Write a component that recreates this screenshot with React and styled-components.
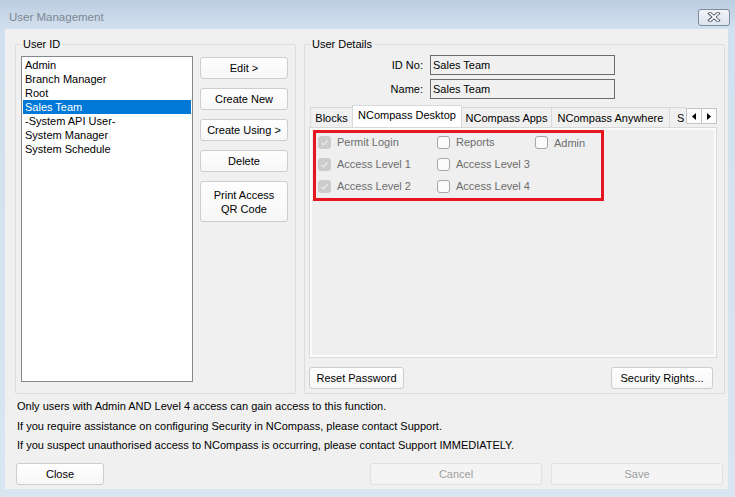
import React from 'react';
import styled, { createGlobalStyle } from 'styled-components';

const Global = createGlobalStyle`
  html, body { margin: 0; padding: 0; }
  body {
    font-family: "Liberation Sans", Arial, sans-serif;
    font-size: 11px;
    color: #000;
    background: #dae5f2;
  }
`;

const Window = styled.div`
  width: 735px;
  height: 497px;
  display: flex;
  flex-direction: column;
  background: linear-gradient(to bottom, #bccde1 0px, #d2dfee 28px, #dae5f2 100%);
  overflow: hidden;
`;

const TitleBar = styled.div`
  height: 29px;
  flex-shrink: 0;
  box-sizing: border-box;
  padding: 5px 5px 0 9px;
  display: flex;
  align-items: center;
  justify-content: space-between;
`;

const Title = styled.span`
  font-size: 11.5px;
  color: #7d8793;
`;

const CloseBtn = styled.div`
  width: 32px;
  height: 17px;
  box-sizing: border-box;
  border: 1px solid #7c8b9d;
  border-radius: 3px;
  background: linear-gradient(#f2f5f9, #dce4ee);
  display: flex;
  align-items: center;
  justify-content: center;
`;

const Client = styled.div`
  margin: 0 7px 0 5px;
  height: 460px;
  box-sizing: border-box;
  background: #f0f0f0;
  display: flex;
  flex-direction: column;
  padding-top: 15px;
`;

const TopRow = styled.div`
  display: flex;
  gap: 8px;
  padding-left: 10px;
`;

const Group = styled.div`
  position: relative;
  width: ${p => p.$w}px;
  height: 350px;
  box-sizing: border-box;
  border: 1px solid #dcdcdc;
  border-radius: 2px;
  display: flex;
  flex-direction: ${p => p.$dir || 'row'};
`;

const GroupLabel = styled.span`
  position: absolute;
  top: -8px;
  left: 5px;
  padding: 0 2px;
  background: #f0f0f0;
  line-height: 14px;
`;

const UserIdBody = styled.div`
  display: flex;
  gap: 7px;
  padding: 11px 0 0 5px;
`;

const ListBox = styled.div`
  width: 172px;
  height: 326px;
  box-sizing: border-box;
  border: 1px solid #828790;
  background: #fff;
  padding: 1px;
`;

const ListItem = styled.div`
  height: 14px;
  line-height: 14px;
  padding-left: 2px;
  background: ${p => (p.$sel ? '#0078d7' : 'transparent')};
  color: ${p => (p.$sel ? '#fff' : '#000')};
  white-space: nowrap;
`;

const ButtonCol = styled.div`
  display: flex;
  flex-direction: column;
  gap: 9px;
  padding-top: 1px;
  width: 88px;
`;

const Button = styled.button`
  width: ${p => (p.$w ? `${p.$w}px` : '100%')};
  height: ${p => p.$h || 22}px;
  box-sizing: border-box;
  margin: 0;
  padding: 0;
  border: 1px solid ${p => (p.disabled ? '#e2e2e2' : '#cdcdcd')};
  border-radius: 3px;
  background: ${p => (p.disabled ? '#f4f4f4' : 'linear-gradient(#fefefe, #f7f7f7)')};
  font-family: "Liberation Sans", Arial, sans-serif;
  font-size: 11px;
  line-height: 14px;
  color: ${p => (p.disabled ? '#a0a0a0' : '#000')};
  text-align: center;
  flex-shrink: 0;
`;

const FormGrid = styled.div`
  display: grid;
  grid-template-columns: 118px 185px;
  column-gap: 7px;
  row-gap: 4px;
  margin-top: 10px;
`;

const FieldLabel = styled.div`
  text-align: right;
  line-height: 21px;
  height: 20px;
`;

const Field = styled.div`
  height: 20px;
  box-sizing: border-box;
  border: 1px solid #6c6c6c;
  background: #f0f0f0;
  padding: 1px 2px 0;
  line-height: 16px;
`;

const TabArea = styled.div`
  margin-top: 6px;
  padding: 0 7px 0 4px;
  display: flex;
  flex-direction: column;
`;

const TabStrip = styled.div`
  display: flex;
  align-items: flex-end;
  height: 22px;
`;

const TabList = styled.div`
  flex: 1;
  display: flex;
  align-items: flex-end;
  height: 22px;
  overflow: hidden;
  padding-left: 1px;
`;

const Tab = styled.div`
  width: ${p => p.$w}px;
  height: ${p => (p.$active ? 22 : 20)}px;
  box-sizing: border-box;
  flex-shrink: 0;
  border: 1px solid #d9d9d9;
  border-bottom: none;
  margin-right: -1px;
  background: ${p => (p.$active ? '#ffffff' : '#f0f0f0')};
  line-height: ${p => (p.$active ? 19 : 20)}px;
  text-align: ${p => p.$align || 'center'};
  padding-left: ${p => p.$pl || 0}px;
  white-space: nowrap;
  overflow: hidden;
  position: relative;
  z-index: ${p => (p.$active ? 1 : 0)};
`;

const ArrowPair = styled.div`
  display: flex;
  margin-bottom: 3px;
`;

const ArrowBtn = styled.div`
  width: 16px;
  height: 16px;
  box-sizing: border-box;
  border: 1px solid #c4c4c4;
  margin-left: ${p => (p.$first ? 0 : -1)}px;
  background: #fdfdfd;
  display: flex;
  align-items: center;
  justify-content: center;
`;

const Panel = styled.div`
  height: 231px;
  box-sizing: border-box;
  border: 1px solid #d9d9d9;
  background: #fbfbfb;
  padding: 2px;
`;

const PanelInner = styled.div`
  height: 100%;
  background: #efefef;
  padding-left: 1px;
`;

const RedBox = styled.div`
  width: 291px;
  height: 71px;
  box-sizing: border-box;
  border: 3px solid #e5161f;
  padding: 2px 0 0 2px;
  display: grid;
  grid-template-columns: 119px 98px auto;
  grid-auto-rows: 14px;
  row-gap: 8px;
`;

const CheckItem = styled.div`
  display: flex;
  align-items: center;
  gap: 6px;
  color: #6d6d6d;
  white-space: nowrap;
  margin-top: ${p => p.$dy || 0}px;
`;

const Box = styled.div`
  width: 13px;
  height: 13px;
  box-sizing: border-box;
  border-radius: 3px;
  border: 1px solid ${p => (p.$checked ? '#cccccc' : '#a6a6a6')};
  background: ${p => (p.$checked ? '#cccccc' : '#fbfbfb')};
  display: flex;
  align-items: center;
  justify-content: center;
  flex-shrink: 0;
`;

const DetailButtons = styled.div`
  margin-top: 9px;
  display: flex;
  justify-content: space-between;
  padding-right: 4px;
`;

const Notes = styled.div`
  margin-top: 3px;
  padding-left: 12px;
  line-height: 19.5px;
`;

const Footer = styled.div`
  margin-top: 7px;
  display: flex;
  gap: 9px;
  padding: 0 5px 0 11px;
`;

const Spacer = styled.div`
  flex: 1;
`;

const users = [
  'Admin',
  'Branch Manager',
  'Root',
  'Sales Team',
  '-System API User-',
  'System Manager',
  'System Schedule',
];

const tabs = [
  { label: 'Blocks', w: 43 },
  { label: 'NCompass Desktop', w: 110, active: true },
  { label: 'NCompass Apps', w: 91 },
  { label: 'NCompass Anywhere', w: 119 },
  { label: 'S', w: 30, align: 'left', pl: 7 },
];

const checks = [
  { label: 'Permit Login', checked: true },
  { label: 'Reports' },
  { label: 'Admin', dy: 1 },
  { label: 'Access Level 1', checked: true },
  { label: 'Access Level 3' },
  null,
  { label: 'Access Level 2', checked: true },
  { label: 'Access Level 4' },
  null,
];

const CheckMark = () => (
  <svg width="9" height="9" viewBox="0 0 9 9">
    <polyline points="1.5,4.8 3.5,6.8 7.6,2.4" fill="none" stroke="#f2f2f2" strokeWidth="1.1" />
  </svg>
);

export default function App() {
  return (
    <>
      <Global />
      <Window>
        <TitleBar>
          <Title>User Management</Title>
          <CloseBtn>
            <svg width="14" height="10" viewBox="0 0 14 10">
              <path d="M3 1.5 L11 8.5 M11 1.5 L3 8.5" stroke="#505a66" strokeWidth="3.6" strokeLinecap="square" />
              <path d="M3 1.5 L11 8.5 M11 1.5 L3 8.5" stroke="#ffffff" strokeWidth="1.7" strokeLinecap="square" />
            </svg>
          </CloseBtn>
        </TitleBar>
        <Client>
          <TopRow>
            <Group $w={281}>
              <GroupLabel>User ID</GroupLabel>
              <UserIdBody>
                <ListBox>
                  {users.map(u => (
                    <ListItem key={u} $sel={u === 'Sales Team'}>{u}</ListItem>
                  ))}
                </ListBox>
                <ButtonCol>
                  <Button>Edit &gt;</Button>
                  <Button>Create New</Button>
                  <Button>Create Using &gt;</Button>
                  <Button>Delete</Button>
                  <Button $h={41}>Print Access<br />QR Code</Button>
                </ButtonCol>
              </UserIdBody>
            </Group>
            <Group $w={421} $dir="column">
              <GroupLabel>User Details</GroupLabel>
              <FormGrid>
                <FieldLabel>ID No:</FieldLabel>
                <Field>Sales Team</Field>
                <FieldLabel>Name:</FieldLabel>
                <Field>Sales Team</Field>
              </FormGrid>
              <TabArea>
                <TabStrip>
                  <TabList>
                    {tabs.map(t => (
                      <Tab key={t.label} $w={t.w} $active={t.active} $align={t.align} $pl={t.pl}>
                        {t.label}
                      </Tab>
                    ))}
                  </TabList>
                  <ArrowPair>
                    <ArrowBtn $first>
                      <svg width="4" height="7" viewBox="0 0 4 7"><polygon points="4,0 4,7 0,3.5" fill="#000" /></svg>
                    </ArrowBtn>
                    <ArrowBtn>
                      <svg width="4" height="7" viewBox="0 0 4 7"><polygon points="0,0 0,7 4,3.5" fill="#000" /></svg>
                    </ArrowBtn>
                  </ArrowPair>
                </TabStrip>
                <Panel>
                  <PanelInner>
                    <RedBox>
                      {checks.map((c, i) =>
                        c ? (
                          <CheckItem key={i} $dy={c.dy}>
                            <Box $checked={c.checked}>{c.checked && <CheckMark />}</Box>
                            {c.label}
                          </CheckItem>
                        ) : (
                          <div key={i} />
                        )
                      )}
                    </RedBox>
                  </PanelInner>
                </Panel>
                <DetailButtons>
                  <Button $w={95}>Reset Password</Button>
                  <Button $w={102}>Security Rights...</Button>
                </DetailButtons>
              </TabArea>
            </Group>
          </TopRow>
          <Notes>
            <div>Only users with Admin AND Level 4 access can gain access to this function.</div>
            <div>If you require assistance on configuring Security in NCompass, please contact Support.</div>
            <div>If you suspect unauthorised access to NCompass is occurring, please contact Support IMMEDIATELY.</div>
          </Notes>
          <Footer>
            <Button $w={88}>Close</Button>
            <Spacer />
            <Button $w={172} disabled>Cancel</Button>
            <Button $w={172} disabled>Save</Button>
          </Footer>
        </Client>
      </Window>
    </>
  );
}
